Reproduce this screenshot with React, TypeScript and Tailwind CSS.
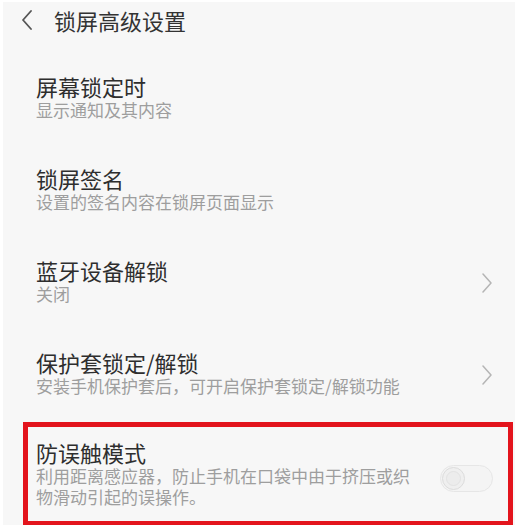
import React from "react";

const font = { fontFamily: '"Noto Sans CJK SC", "Noto Sans", sans-serif' };

type Item = {
  title: string;
  desc: string;
  arrow?: boolean;
};

const items: Item[] = [
  { title: "屏幕锁定时", desc: "显示通知及其内容" },
  { title: "锁屏签名", desc: "设置的签名内容在锁屏页面显示" },
  { title: "蓝牙设备解锁", desc: "关闭", arrow: true },
  { title: "保护套锁定/解锁", desc: "安装手机保护套后，可开启保护套锁定/解锁功能", arrow: true },
];

function Chevron({ left = false }: { left?: boolean }) {
  return (
    <svg width="12" height="20" viewBox="0 0 12 20" fill="none">
      <path
        d={left ? "M10 1 L2 10 L10 19" : "M2 1 L10 10 L2 19"}
        stroke={left ? "#555" : "#b5b5b5"}
        strokeWidth={left ? 1.8 : 1.5}
        strokeLinecap="round"
        strokeLinejoin="round"
      />
    </svg>
  );
}

function Toggle() {
  return (
    <div className="w-[53px] h-[27px] rounded-full border-[1.5px] border-[#e6e6e6] bg-[#f4f4f4] flex items-center px-[1px]">
      <div className="w-[23px] h-[23px] rounded-full border border-[#dcdcdc] bg-[#efefef] flex items-center justify-center">
        <div className="w-[15px] h-[15px] rounded-full border border-[#e2e2e2] bg-[#ececec]" />
      </div>
    </div>
  );
}

export default function App() {
  return (
    <div
      className="w-[520px] h-[525px] overflow-hidden bg-[#f7f7f7] border-t-2 border-l-[3px] border-r-[5px] border-white flex flex-col"
      style={font}
    >
      {/* header */}
      <div className="h-[51px] shrink-0 flex items-start pt-[7px]">
        <div className="ml-[18px] mt-[1px]">
          <Chevron left />
        </div>
        <div className="ml-[21px] text-[22px] leading-[22px] text-[#333]">锁屏高级设置</div>
      </div>

      {items.map((it) => (
        <div key={it.title} className="h-[92px] shrink-0 flex items-start pt-[20px] pl-[33px] pr-[22px]">
          <div className="flex items-center w-full">
            <div className="flex-1">
              <div className="text-[22px] leading-[26px] text-[#2e2e2e]">{it.title}</div>
              <div className="text-[17px] leading-[21px] text-[#9e9e9e]">{it.desc}</div>
            </div>
            {it.arrow && (
              <div className="pt-[4px]">
                <Chevron />
              </div>
            )}
          </div>
        </div>
      ))}

      {/* highlighted row */}
      <div className="ml-[20px] mr-[2px] mt-[1px] border-[5px] border-[#e3141c] pl-[8px] pr-[15px] pt-[12px] pb-[14px] flex items-center">
        <div className="flex-1">
          <div className="text-[22px] leading-[26px] text-[#2e2e2e]">防误触模式</div>
          <div className="w-[380px] text-[17px] leading-[21px] text-[#9e9e9e]">
            利用距离感应器，防止手机在口袋中由于挤压或织物滑动引起的误操作。
          </div>
        </div>
        <div className="mt-[10px]">
          <Toggle />
        </div>
      </div>
    </div>
  );
}
